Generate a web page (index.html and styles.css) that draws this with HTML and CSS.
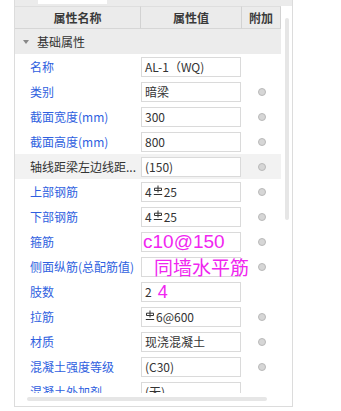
FILE: index.html
```html
<!DOCTYPE html>
<html lang="zh">
<head>
<meta charset="utf-8">
<link rel="stylesheet" href="styles.css">
</head>
<body>
<div class="panel">
  <div class="topstrip"><div class="tab"></div></div>
  <div class="body">
    <div class="viewport">
      <div class="grid">
        <div class="hd">属性名称</div>
        <div class="hd">属性值</div>
        <div class="hd last">附加</div>

        <div class="group"><span class="tri"></span>基础属性</div>

        <div class="row">
          <div class="name">名称</div><div class="val"><div class="box">AL-1（WQ)</div></div><div class="extra"></div>
        </div>
        <div class="row">
          <div class="name">类别</div><div class="val"><div class="box">暗梁</div></div><div class="extra"><span class="dot"></span></div>
        </div>
        <div class="row">
          <div class="name">截面宽度(mm)</div><div class="val"><div class="box">300</div></div><div class="extra"><span class="dot"></span></div>
        </div>
        <div class="row">
          <div class="name">截面高度(mm)</div><div class="val"><div class="box">800</div></div><div class="extra"><span class="dot"></span></div>
        </div>
        <div class="row hl">
          <div class="name gray">轴线距梁左边线距...</div><div class="val"><div class="box">(150)</div></div><div class="extra"><span class="dot"></span></div>
        </div>
        <div class="row">
          <div class="name">上部钢筋</div><div class="val"><div class="box">4<svg class="rb" viewBox="0 0 10 11"><path d="M5 0.5V7.5M1.5 5.5V3.2H8.5V5.5M1.5 5.5H8.5M0.8 9.5H9.2"/></svg>25</div></div><div class="extra"><span class="dot"></span></div>
        </div>
        <div class="row">
          <div class="name">下部钢筋</div><div class="val"><div class="box">4<svg class="rb" viewBox="0 0 10 11"><path d="M5 0.5V7.5M1.5 5.5V3.2H8.5V5.5M1.5 5.5H8.5M0.8 9.5H9.2"/></svg>25</div></div><div class="extra"><span class="dot"></span></div>
        </div>
        <div class="row">
          <div class="name">箍筋</div><div class="val"><div class="box tight"><span class="pink">c10@150</span></div></div><div class="extra"><span class="dot"></span></div>
        </div>
        <div class="row">
          <div class="name">侧面纵筋(总配筋值)</div><div class="val"><div class="box tight"><span class="pink ind">同墙水平筋</span></div></div><div class="extra"><span class="dot"></span></div>
        </div>
        <div class="row">
          <div class="name">肢数</div><div class="val"><div class="box">2<span class="pink four">4</span></div></div><div class="extra"></div>
        </div>
        <div class="row">
          <div class="name">拉筋</div><div class="val"><div class="box"><svg class="rb first" viewBox="0 0 10 11"><path d="M5 0.5V7.5M1.5 5.5V3.2H8.5V5.5M1.5 5.5H8.5M0.8 9.5H9.2"/></svg>6@600</div></div><div class="extra"><span class="dot"></span></div>
        </div>
        <div class="row">
          <div class="name">材质</div><div class="val"><div class="box">现浇混凝土</div></div><div class="extra"><span class="dot"></span></div>
        </div>
        <div class="row">
          <div class="name">混凝土强度等级</div><div class="val"><div class="box">(C30)</div></div><div class="extra"><span class="dot"></span></div>
        </div>
        <div class="row">
          <div class="name">混凝土外加剂</div><div class="val"><div class="box">(无)</div></div><div class="extra"></div>
        </div>
      </div>
    </div>
    <div class="vscroll"><div class="vthumb"></div></div>
  </div>
  <div class="hscroll"><div class="hthumb"></div></div>
</div>
</body>
</html>
```
FILE: styles.css
```css
html, body {
  margin: 0;
  padding: 0;
  background: #ffffff;
}
body {
  font-family: "Noto Sans CJK SC", "Noto Sans", sans-serif;
  font-size: 12px;
  color: #333333;
}
.panel {
  margin-left: 14px;
  width: 277px;
  height: 406px;
  border: 1px solid #dcdcdc;
  border-top: none;
  display: flex;
  flex-direction: column;
}
.topstrip {
  height: 6px;
  background: #ebebeb;
  flex: none;
}
.tab {
  margin-left: 23px;
  width: 69px;
  height: 4px;
  background: #ffffff;
}
.body {
  display: flex;
  height: 387px;
  flex: none;
}
.viewport {
  width: 266px;
  height: 387px;
  overflow: hidden;
  flex: none;
}
.grid {
  display: grid;
  grid-template-columns: 126px 101px 39px;
  grid-auto-rows: 25px;
  grid-template-rows: 23px;
}
.hd {
  background: #ebebeb;
  border-right: 1px solid #d2d2d2;
  border-bottom: 1px solid #d6d6d6;
  border-top: 1px solid #dedede;
  display: flex;
  align-items: center;
  justify-content: center;
  font-weight: bold;
  color: #3a3a3a;
  font-size: 12px;
  line-height: 1;
}
.group {
  grid-column: 1 / 4;
  background: #ececec;
  display: flex;
  align-items: center;
  padding-left: 8px;
  color: #333333;
}
.tri {
  width: 0;
  height: 0;
  border-left: 3px solid transparent;
  border-right: 3px solid transparent;
  border-top: 4px solid #888888;
  margin-right: 8px;
  margin-top: 1px;
}
.row {
  display: contents;
}
.name {
  padding-left: 15px;
  padding-right: 2px;
  display: flex;
  align-items: center;
  color: #2f5fe0;
  white-space: nowrap;
  overflow: hidden;
  min-width: 0;
}
.name.gray {
  color: #333333;
}
.val {
  display: flex;
  align-items: center;
}
.box {
  width: 100px;
  height: 20px;
  box-sizing: border-box;
  border: 1px solid #dadada;
  background: #ffffff;
  padding-left: 3px;
  display: flex;
  align-items: center;
  white-space: nowrap;
  overflow: visible;
  color: #333333;
}
.box.tight {
  padding-left: 1px;
}
.extra {
  display: flex;
  align-items: center;
  justify-content: center;
}
.row.hl > div {
  background: #f2f2f2;
}
.dot {
  width: 6px;
  height: 6px;
  border-radius: 50%;
  background: #d6d6d6;
  border: 1px solid #b9b9b9;
}
.rb {
  width: 10px;
  height: 11px;
  margin: 0 1px 2px 1px;
  fill: none;
  stroke: #333333;
  stroke-width: 1;
}
.rb.first {
  margin-left: 0;
}
.pink {
  font-family: "Liberation Sans", "Noto Sans CJK SC", sans-serif;
  color: #f026f0;
  font-size: 19px;
  line-height: 1;
}
.pink.ind {
  font-family: "Noto Sans CJK SC", sans-serif;
  margin-left: 11px;
}
.pink.four {
  margin-left: 6px;
  font-size: 18px;
}
.vscroll {
  width: 11px;
  flex: none;
}
.vthumb {
  margin-left: 4px;
  margin-top: 12px;
  width: 4px;
  height: 202px;
  border-radius: 2px;
  background: #e6e6e6;
}
.hscroll {
  flex: none;
  height: 13px;
}
.hthumb {
  margin-left: 12px;
  margin-top: 4px;
  width: 240px;
  height: 4px;
  border-radius: 2px;
  background: #e6e6e6;
}
```
